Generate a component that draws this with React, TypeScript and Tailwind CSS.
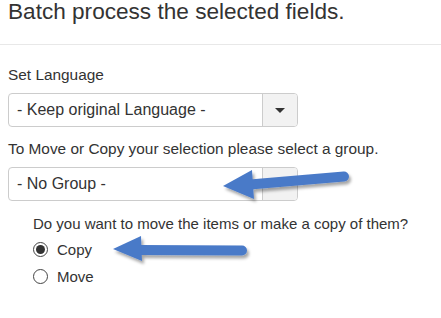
export default function App() {
  return (
    <div className="relative w-[441px] h-[318px] bg-white text-[#333] font-['Liberation_Sans',Arial,sans-serif] overflow-hidden">
      <h1 className="pl-2 text-[22.6px] leading-[24px] font-normal">
        Batch process the selected fields.
      </h1>
      <div className="mt-5 border-t border-[#e8e8e8]" />

      <div className="px-2 pt-5">
        <label className="block text-[15.4px] leading-[20px]">Set Language</label>
        <FakeSelect value="- Keep original Language -" />

        <label className="block mt-3 text-[15.4px] leading-[20px]">
          To Move or Copy your selection please select a group.
        </label>
        <FakeSelect value="- No Group -" />

        <div className="mt-[13px] pl-[25px]">
          <p className="text-[15px] leading-[20px]">
            Do you want to move the items or make a copy of them?
          </p>
          <div className="mt-[2px]">
            <Radio label="Copy" checked />
            <Radio label="Move" />
          </div>
        </div>
      </div>

      {/* annotation arrows drawn over the form */}
      <svg
        className="absolute inset-0 pointer-events-none"
        width="441"
        height="318"
        viewBox="0 0 441 318"
      >
        <defs>
          <filter id="shadow" x="-20%" y="-50%" width="140%" height="200%">
            <feDropShadow dx="2" dy="3" stdDeviation="1.6" floodColor="#000" floodOpacity="0.35" />
          </filter>
        </defs>
        <g filter="url(#shadow)" fill="#4a7ac8" stroke="#4a7ac8">
          <line x1="250" y1="184.5" x2="344" y2="176.5" strokeWidth="10" strokeLinecap="round" />
          <polygon points="223,186 252,170 254,199" strokeWidth="0" />
          <line x1="140" y1="250" x2="242" y2="250.5" strokeWidth="10" strokeLinecap="round" />
          <polygon points="113,249 141,236 142,261" strokeWidth="0" />
        </g>
      </svg>
    </div>
  );
}

function FakeSelect({ value }: { value: string }) {
  return (
    <div className="mt-2 flex w-[290px] h-[34px] border border-[#ccc] rounded-[4px] overflow-hidden">
      <div className="flex-1 flex items-center pl-2 text-[16px] text-[#333]">{value}</div>
      <div className="w-[35px] flex items-center justify-center bg-[#f2f2f2] border-l border-[#ccc]">
        <span className="w-0 h-0 border-l-[5px] border-r-[5px] border-t-[5px] border-l-transparent border-r-transparent border-t-[#333]" />
      </div>
    </div>
  );
}

function Radio({ label, checked }: { label: string; checked?: boolean }) {
  return (
    <div className="flex items-center h-[27px]">
      <span className="w-[15px] h-[15px] rounded-full border border-[#444] flex items-center justify-center">
        {checked && <span className="w-[9px] h-[9px] rounded-full bg-[#333]" />}
      </span>
      <span className="ml-[9px] text-[15px] leading-[20px]">{label}</span>
    </div>
  );
}
